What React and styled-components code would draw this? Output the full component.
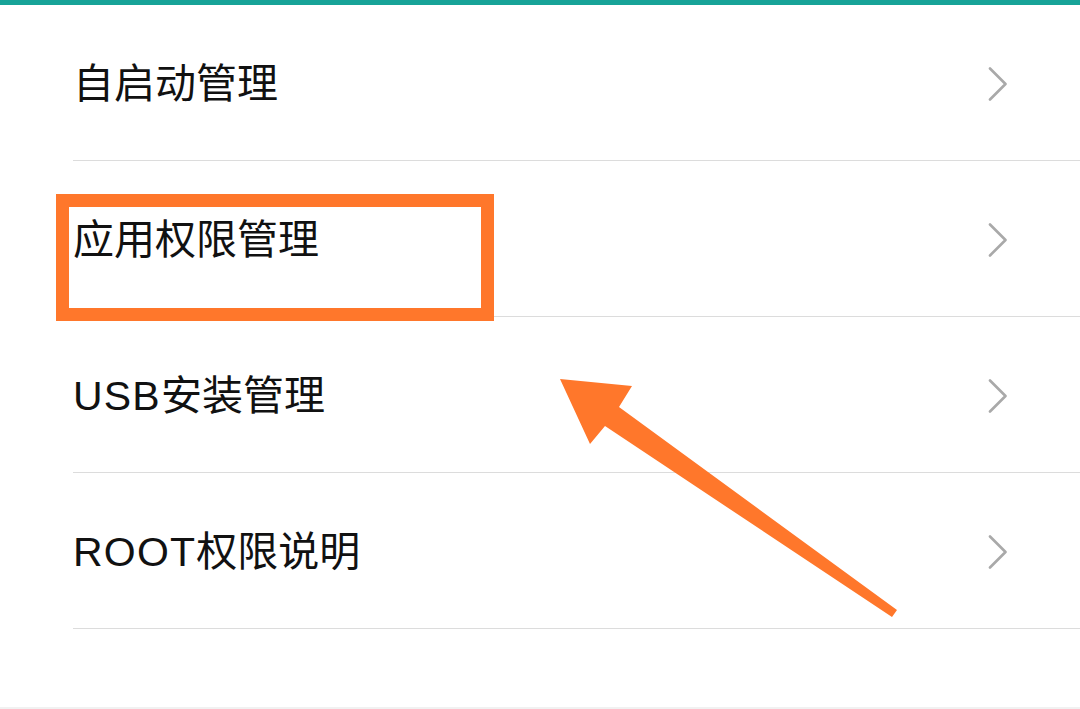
import React from "react";
import styled, { createGlobalStyle } from "styled-components";

const Global = createGlobalStyle`
  html, body { margin: 0; padding: 0; background: #fff; }
  body { font-family: "Liberation Sans", "Noto Sans CJK SC", sans-serif; }
`;

const Page = styled.div`
  position: relative;
  height: 709px;
  box-sizing: border-box;
  border-bottom: 2px solid #f1f1f1;
  overflow: hidden;
  background: #fff;
`;

const TopBar = styled.div`
  height: 5px;
  background: #17a398;
`;

const List = styled.div`
  display: flex;
  flex-direction: column;
`;

const Row = styled.div`
  height: 156px;
  box-sizing: border-box;
  margin-left: 73px;
  padding: 3px 72px 0 0;
  border-bottom: 1px solid #dcdcdc;
  display: flex;
  align-items: center;
  justify-content: space-between;
`;

const Label = styled.span`
  font-size: 41px;
  color: #111;
  line-height: 1;
`;

const Latin = styled.span`
  letter-spacing: 1.2px;
`;

const Chevron = () => (
  <svg width="20" height="34" viewBox="0 0 20 34">
    <polyline
      points="2,1.5 17.5,17 2,32.5"
      fill="none"
      stroke="#a9a9a9"
      strokeWidth="2.6"
      strokeLinecap="round"
      strokeLinejoin="round"
    />
  </svg>
);

const Highlight = styled.div`
  position: absolute;
  left: 56px;
  top: 194px;
  width: 438px;
  height: 127px;
  box-sizing: border-box;
  border: 13px solid #ff772b;
  pointer-events: none;
`;

const ArrowLayer = styled.svg`
  position: absolute;
  left: 0;
  top: 0;
  pointer-events: none;
`;

const items = [
  { latin: "", text: "自启动管理" },
  { latin: "", text: "应用权限管理" },
  { latin: "USB", text: "安装管理" },
  { latin: "ROOT", text: "权限说明" },
];

export default function App() {
  return (
    <>
      <Global />
      <Page>
        <TopBar />
        <List>
          {items.map((it) => (
            <Row key={it.text}>
              <Label>
                {it.latin && <Latin>{it.latin}</Latin>}
                {it.text}
              </Label>
              <Chevron />
            </Row>
          ))}
        </List>
        <Highlight />
        <ArrowLayer width="1080" height="709" viewBox="0 0 1080 709">
          <polygon
            points="560,379 632,386 619,407 897,610 892,617 605,426 590,444"
            fill="#ff772b"
          />
        </ArrowLayer>
      </Page>
    </>
  );
}
